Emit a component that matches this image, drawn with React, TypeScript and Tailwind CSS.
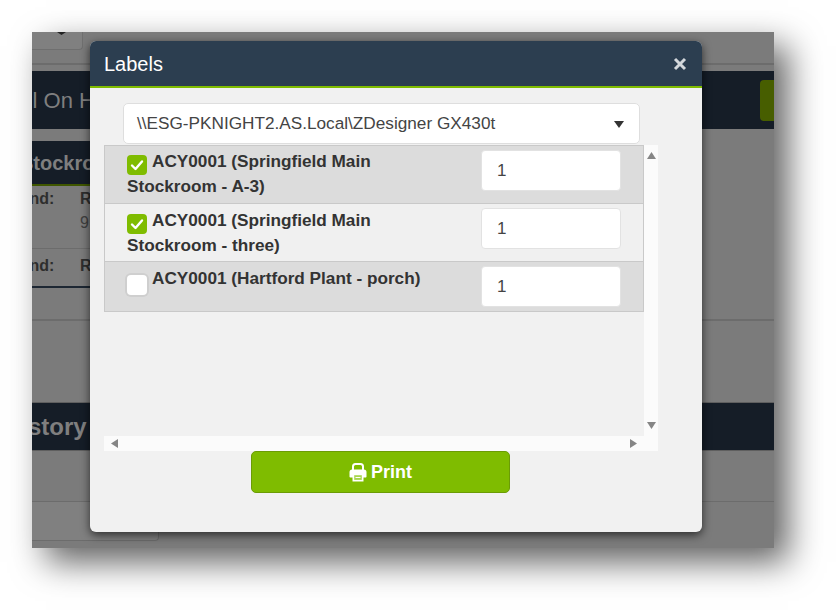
const rows = [
  { label: 'ACY0001 (Springfield Main Stockroom - A-3)', checked: true, shaded: true, height: 'h-[58px]', top: 'pt-[3px]' },
  { label: 'ACY0001 (Springfield Main Stockroom - three)', checked: true, shaded: false, height: 'h-[58px]', top: 'pt-[4px]' },
  { label: 'ACY0001 (Hartford Plant - porch)', checked: false, shaded: true, height: 'h-[50px]', top: 'pt-[4px]' },
]

function Arrow({ dir }: { dir: 'up' | 'down' | 'left' | 'right' }) {
  const points = {
    up: '0,7 4.5,0 9,7',
    down: '0,0 9,0 4.5,7',
    left: '7,0 7,9 0,4.5',
    right: '0,0 7,4.5 0,9',
  }[dir]
  const size = dir === 'up' || dir === 'down' ? 'w-[9px] h-[7px]' : 'w-[7px] h-[9px]'
  return (
    <svg className={size} viewBox={dir === 'up' || dir === 'down' ? '0 0 9 7' : '0 0 7 9'}>
      <polygon points={points} fill="#858585" />
    </svg>
  )
}

function PrintIcon() {
  return (
    <svg className="w-[18px] h-[19px]" viewBox="0 0 18 19" fill="none">
      <path d="M4 8V3.5C4 2 5 1 6.5 1H11.5C13 1 14 2 14 3.5V8" stroke="white" strokeWidth="2" />
      <path d="M0.5 9C0.5 7.6 1.5 6.5 3 6.5H15C16.5 6.5 17.5 7.6 17.5 9V13.5C17.5 14.2 17 14.5 16.5 14.5H1.5C1 14.5 0.5 14.2 0.5 13.5V9Z" fill="white" />
      <path d="M3.5 10.5H14.5V18.5H3.5Z" fill="white" />
      <path d="M5.2 12.2H12.8V16.9H5.2Z" fill="#a8d64d" />
      <path d="M6.5 14.5H11.5" stroke="white" strokeWidth="1" />
    </svg>
  )
}

function Backdrop() {
  return (
    <div className="flex flex-col h-full overflow-hidden bg-[#7b7b7b] text-[#7f7f7f]">
      <div className="h-[18px] w-[51px] shrink-0 bg-[#808080] border-r border-b border-[#6f6f6f] rounded-br flex justify-end pr-[16px]">
        <svg className="w-[9px] h-[3px]" viewBox="0 0 9 3">
          <polygon points="0,0 9,0 4.5,3" fill="#222" />
        </svg>
      </div>
      <div className="h-[15px] shrink-0 border-b-2 border-[#6c6c6c]" />
      <div className="mt-[6px] h-[58px] shrink-0 bg-[#151d27] flex items-center justify-between overflow-hidden">
        <span className="text-[22px] whitespace-nowrap -ml-[19px]">All On Hand</span>
        <div className="w-[14px] h-[41px] bg-[#475e00] rounded-l" />
      </div>
      <div className="mt-[12px] h-[45px] w-[400px] shrink-0 bg-[#151d27] border-b-2 border-[#3f5600] flex items-center overflow-hidden">
        <span className="text-[20px] font-bold whitespace-nowrap -ml-[12px]">Stockroom</span>
      </div>
      <div className="h-[63px] w-[400px] shrink-0 flex text-[16px] leading-[24px] border-b border-[#6c6c6c] text-[#2e2e2e]">
        <span className="font-bold whitespace-nowrap -ml-[14px] w-[62px] mt-[1px]">Bnd:</span>
        <div className="flex flex-col mt-[1px]">
          <span className="font-bold">R</span>
          <span className="text-[#404040]">9</span>
        </div>
      </div>
      <div className="h-[39px] w-[400px] shrink-0 flex text-[16px] leading-[24px] text-[#2e2e2e] border-b-2 border-[#1d2733]">
        <span className="font-bold whitespace-nowrap -ml-[14px] w-[62px] mt-[5px]">Bnd:</span>
        <span className="font-bold mt-[5px]">R</span>
      </div>
      <div className="h-[33px] shrink-0 border-b-2 border-[#6c6c6c]" />
      <div className="mt-[81px] h-[49px] shrink-0 bg-[#151d27] border-y border-[#5f5f5f] flex items-center overflow-hidden">
        <span className="text-[24px] font-bold whitespace-nowrap -ml-[28px]">History</span>
      </div>
      <div className="h-[51px] shrink-0 border-b border-[#6c6c6c]" />
      <div className="h-[39px] w-[127px] shrink-0 border-r border-b border-[#6c6c6c] rounded-br bg-[#808080]" />
    </div>
  )
}

function LabelRow({ row }: { row: (typeof rows)[number] }) {
  return (
    <div className={`${row.height} flex shrink-0 border-b border-[#c9c9c9] ${row.shaded ? 'bg-[#dcdcdc]' : 'bg-[#f0f0f0]'}`}>
      <div className={`w-[353px] pl-[22px] ${row.top} text-[17.2px] leading-[25px] font-bold text-[#333333]`}>
        <span
          className={`inline-flex items-center justify-center w-[20px] h-[20px] -mb-[6px] rounded-[4px] align-[-5px] mr-[5px] ${
            row.checked ? 'bg-[#7fbc00]' : 'bg-white shadow-[0_0_0_2px_#cfcfcf]'
          }`}
        >
          {row.checked && (
            <svg className="w-[14px] h-[14px]" viewBox="0 0 14 14" fill="none">
              <path d="M2 7.5L5.5 11L12 3.5" stroke="white" strokeWidth="2.4" strokeLinecap="round" strokeLinejoin="round" />
            </svg>
          )}
        </span>
        {row.label}
      </div>
      <input
        defaultValue="1"
        className="ml-[23px] mt-[4px] w-[140px] h-[41px] bg-white border border-[#e2e2e2] rounded-[4px] px-[15px] text-[17px] text-[#444444]"
      />
    </div>
  )
}

export default function App() {
  return (
    <div className="w-[839px] h-[613px] bg-white pt-[32px] pl-[32px] font-['Liberation_Sans',Arial,sans-serif] overflow-hidden">
      <div className="relative w-[742px] h-[516px] shadow-[14px_14px_32px_rgba(0,0,0,0.62)]">
        <Backdrop />

        {/* modal */}
        <div className="absolute left-[58px] top-[9px] w-[612px] h-[491px] bg-[#f1f1f1] rounded-[6px] shadow-[0_3px_10px_rgba(0,0,0,0.65)] flex flex-col overflow-hidden">
          <div className="h-[47px] shrink-0 bg-[#2c3e50] border-b-2 border-[#7fbc00] flex items-center justify-between pl-[14px] pr-[15px] text-white">
            <span className="text-[20px]">Labels</span>
            <svg className="w-[14px] h-[14px]" viewBox="0 0 14 14">
              <path d="M2 2 L12 12 M12 2 L2 12" stroke="#d4d8dc" strokeWidth="3" />
            </svg>
          </div>

          <div className="mt-[15px] ml-[33px] w-[517px] h-[41px] shrink-0 bg-white border border-[#dedede] rounded-[5px] flex items-center justify-between pl-[13px] pr-[15px] text-[17.2px] text-[#444444]">
            <span>\\ESG-PKNIGHT2.AS.Local\ZDesigner GX430t</span>
            <svg className="w-[10px] h-[7px] mt-[2px]" viewBox="0 0 10 7">
              <polygon points="0,0 10,0 5,7" fill="#333" />
            </svg>
          </div>

          <div className="mt-[1px] ml-[14px] w-[554px] h-[306px] shrink-0 bg-[#fbfbfb] grid grid-cols-[540px_14px] grid-rows-[291px_15px]">
            <div className="bg-[#f1f1f1]">
              <div className="flex flex-col border-t border-x border-[#c9c9c9]">
                {rows.map((row) => (
                  <LabelRow key={row.label} row={row} />
                ))}
              </div>
            </div>
            <div className="flex flex-col items-center justify-between pt-[7px] pb-[7px]">
              <Arrow dir="up" />
              <Arrow dir="down" />
            </div>
            <div className="flex items-center justify-between pl-[7px] pr-[7px]">
              <Arrow dir="left" />
              <Arrow dir="right" />
            </div>
            <div />
          </div>

          <button className="ml-[161px] w-[259px] h-[42px] shrink-0 bg-[#7fbc00] border border-[#6b9c05] rounded-[5px] flex items-center justify-center gap-[4px] text-white text-[18px] font-bold">
            <PrintIcon />
            Print
          </button>
        </div>
      </div>
    </div>
  )
}
